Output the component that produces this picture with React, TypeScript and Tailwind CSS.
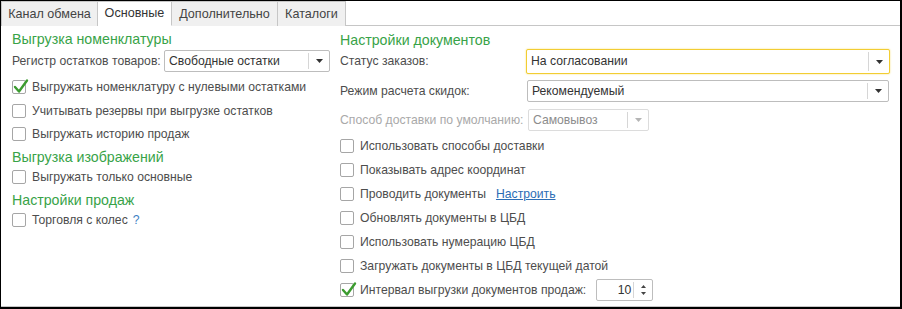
import type { ReactNode } from 'react'

const font = { fontFamily: '"Liberation Sans", Arial, sans-serif' }

function Check({ checked = false }: { checked?: boolean }) {
  return (
    <span className="relative inline-block h-[14px] w-[14px] shrink-0 rounded-[2px] border border-[#a6a6a6] bg-white">
      {checked && (
        <svg className="absolute -left-[1px] -top-[3px]" width="17" height="17" viewBox="0 0 17 17">
          <path d="M3 9 L7 13.5 L15 2.5" fill="none" stroke="#3b9b2f" strokeWidth="2.4" strokeLinecap="round" strokeLinejoin="round" />
        </svg>
      )}
    </span>
  )
}

function CheckRow({ label, checked, h, children }: { label: string; checked?: boolean; h: string; children?: ReactNode }) {
  return (
    <div className={`flex items-center gap-[6px] whitespace-nowrap ${h}`}>
      <Check checked={checked} />
      <span>{label}</span>
      {children}
    </div>
  )
}

function Arrow({ light }: { light?: boolean }) {
  return (
    <svg width="7" height="4" viewBox="0 0 7 4">
      <path d="M0 0 L7 0 L3.5 4 Z" fill={light ? '#b5b5b5' : '#333'} />
    </svg>
  )
}

function Select({ value, w, h, focused, disabled }: { value: string; w: string; h: string; focused?: boolean; disabled?: boolean }) {
  const border = focused
    ? 'border-[#f2cd32] shadow-[0_0_2px_#f5dc70]'
    : disabled
      ? 'border-[#dcdcdc]'
      : 'border-[#bdbdbd]'
  return (
    <div className={`flex shrink-0 ${w} ${h} items-stretch rounded-[2px] border bg-white ${border}`}>
      <div className={`flex flex-1 items-center pl-[4px] ${disabled ? 'text-[#8c8c8c]' : 'text-[#333]'}`}>{value}</div>
      <div className="my-[2px] flex w-[21px] items-center justify-center border-l border-[#d6d6d6]">
        <Arrow light={disabled} />
      </div>
    </div>
  )
}

function Heading({ children, h }: { children: ReactNode; h: string }) {
  return <div className={`flex items-center whitespace-nowrap text-[14.2px] text-[#38a348] ${h}`}>{children}</div>
}

const tabs = [
  { name: 'Канал обмена', w: 'w-[97px]' },
  { name: 'Основные', w: 'w-[74px]', active: true },
  { name: 'Дополнительно', w: 'w-[106px]' },
  { name: 'Каталоги', w: 'w-[68px]' },
]

export default function App() {
  return (
    <div style={font} className="h-[309px] w-[902px] overflow-hidden border-t border-l border-b-2 border-r-2 border-black bg-white text-[12.2px] text-[#4d4d4d]">
      <div className="flex h-[306px] flex-col border-b border-[#c6c6c6]">
        <div className="flex h-[25px] shrink-0 border-b border-[#c6c6c6]">
          {tabs.map((t) => (
            <div
              key={t.name}
              className={`-mb-px flex ${t.w} items-center justify-center border-r border-t border-[#c6c6c6] text-[12.6px] first:border-l ${
                t.active ? 'border-b border-b-white bg-white text-[#333]' : 'bg-[#f0f0f0] text-[#444]'
              }`}
            >
              {t.name}
            </div>
          ))}
        </div>

        <div className="flex flex-1">
          <div className="w-[339px] shrink-0 pl-[11px] pt-[5px]">
            <Heading h="h-[18px]">Выгрузка номенклатуры</Heading>
            <div className="mt-[1px] flex h-[22px] items-center">
              <span className="w-[152px] shrink-0 whitespace-nowrap">Регистр остатков товаров:</span>
              <Select value="Свободные остатки" w="w-[166px]" h="h-[22px]" />
            </div>
            <div className="mt-[3px]">
              <CheckRow h="h-[24px]" checked label="Выгружать номенклатуру с нулевыми остатками" />
              <CheckRow h="h-[24px]" label="Учитывать резервы при выгрузке остатков" />
              <CheckRow h="h-[22px]" label="Выгружать историю продаж" />
            </div>
            <Heading h="mt-[4px] h-[18px]">Выгрузка изображений</Heading>
            <CheckRow h="h-[20px]" label="Выгружать только основные" />
            <Heading h="mt-[5px] h-[18px]">Настройки продаж</Heading>
            <CheckRow h="h-[20px]" label="Торговля с колес">
              <span className="-ml-[1px] text-[#3d7fc4]">?</span>
            </CheckRow>
          </div>

          <div className="flex-1 pt-[7px]">
            <Heading h="h-[16px]">Настройки документов</Heading>
            <div className="flex h-[25px] items-center">
              <span className="w-[186px] shrink-0 whitespace-nowrap">Статус заказов:</span>
              <Select value="На согласовании" w="w-[364px]" h="h-[25px]" focused />
            </div>
            <div className="mt-[6px] flex h-[22px] items-center">
              <span className="w-[187px] shrink-0 whitespace-nowrap">Режим расчета скидок:</span>
              <Select value="Рекомендуемый" w="w-[362px]" h="h-[22px]" />
            </div>
            <div className="mt-[7px] flex h-[22px] items-center">
              <span className="w-[188px] shrink-0 whitespace-nowrap text-[#a9a9a9]">Способ доставки по умолчанию:</span>
              <Select value="Самовывоз" w="w-[121px]" h="h-[22px]" disabled />
            </div>
            <div className="mt-[3px]">
              <CheckRow h="h-[24px]" label="Использовать способы доставки" />
              <CheckRow h="h-[24px]" label="Показывать адрес координат" />
              <CheckRow h="h-[24px]" label="Проводить документы">
                <span className="ml-[4px] text-[#2c6db5] underline">Настроить</span>
              </CheckRow>
              <CheckRow h="h-[24px]" label="Обновлять документы в ЦБД" />
              <CheckRow h="h-[24px]" label="Использовать нумерацию ЦБД" />
              <CheckRow h="h-[24px]" label="Загружать документы в ЦБД текущей датой" />
              <CheckRow h="h-[24px]" checked label="Интервал выгрузки документов продаж:">
                <div className="ml-[4px] flex h-[22px] w-[57px] rounded-[2px] border border-[#bdbdbd] bg-white">
                  <div className="flex flex-1 items-center justify-end pr-[2px] text-[#333]">10</div>
                  <div className="my-[2px] flex w-[19px] flex-col items-center justify-center gap-[4px] border-l border-[#d6d6d6]">
                    <svg width="5" height="3" viewBox="0 0 5 3"><path d="M0 3 L5 3 L2.5 0 Z" fill="#444" /></svg>
                    <svg width="5" height="3" viewBox="0 0 5 3"><path d="M0 0 L5 0 L2.5 3 Z" fill="#444" /></svg>
                  </div>
                </div>
              </CheckRow>
            </div>
          </div>
        </div>
      </div>
    </div>
  )
}
